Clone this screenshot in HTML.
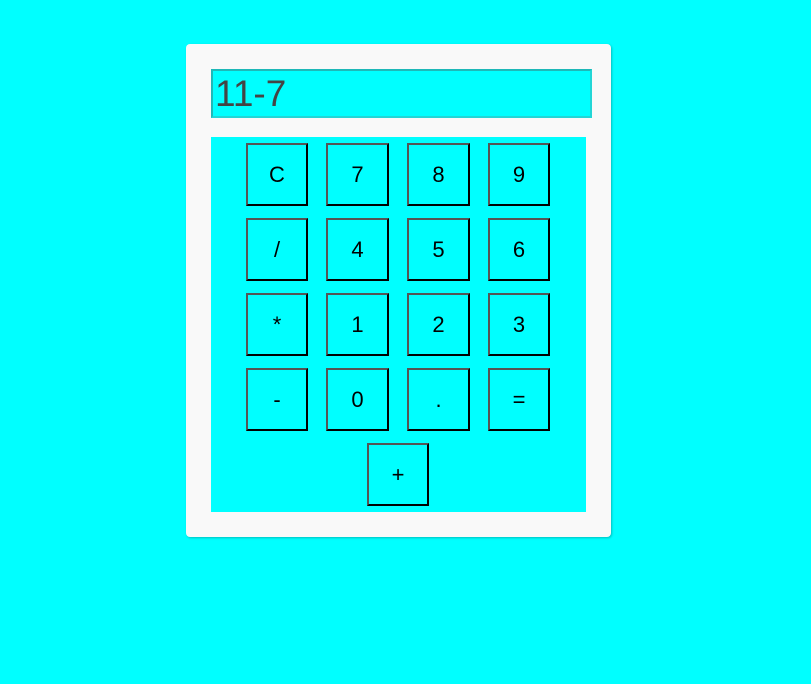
<!DOCTYPE html>
<html><head><style>
html,body{margin:0;padding:0;background:#00ffff;width:811px;height:684px;overflow:hidden;font-family:"Liberation Sans",Arial,sans-serif}
.card{position:absolute;left:186px;top:44px;width:425px;height:493px;background:#f9f9f9;border-radius:4px;box-shadow:1px 1px 2px rgba(0,0,0,0.25)}
.inp{position:absolute;left:211px;top:69px;width:375px;height:45px;background:#00ffff;border:2px solid #22d6d6;border-top-color:#1eb8b8;border-left-color:#1eb8b8;font-size:37px;color:#444;line-height:45px;padding-left:2px;box-sizing:content-box}
.panel{position:absolute;left:211px;top:137px;width:375px;height:375px;background:#00ffff}
.b{position:absolute;width:58px;height:59px;border:2px solid;border-color:#555 #000 #000 #555;background:#00ffff;font-size:22px;color:#000;text-align:center;line-height:59px}
.w{width:59px}
</style></head><body>
<div class="card"></div>
<div class="inp">11-7</div>
<div class="panel"></div>
<div class="b" style="left:246px;top:143px">C</div>
<div class="b w" style="left:326px;top:143px">7</div>
<div class="b w" style="left:407px;top:143px">8</div>
<div class="b" style="left:488px;top:143px">9</div>
<div class="b" style="left:246px;top:218px">/</div>
<div class="b w" style="left:326px;top:218px">4</div>
<div class="b w" style="left:407px;top:218px">5</div>
<div class="b" style="left:488px;top:218px">6</div>
<div class="b" style="left:246px;top:293px">*</div>
<div class="b w" style="left:326px;top:293px">1</div>
<div class="b w" style="left:407px;top:293px">2</div>
<div class="b" style="left:488px;top:293px">3</div>
<div class="b" style="left:246px;top:368px">-</div>
<div class="b w" style="left:326px;top:368px">0</div>
<div class="b w" style="left:407px;top:368px">.</div>
<div class="b" style="left:488px;top:368px">=</div>
<div class="b" style="left:367px;top:443px">+</div>
</body></html>
